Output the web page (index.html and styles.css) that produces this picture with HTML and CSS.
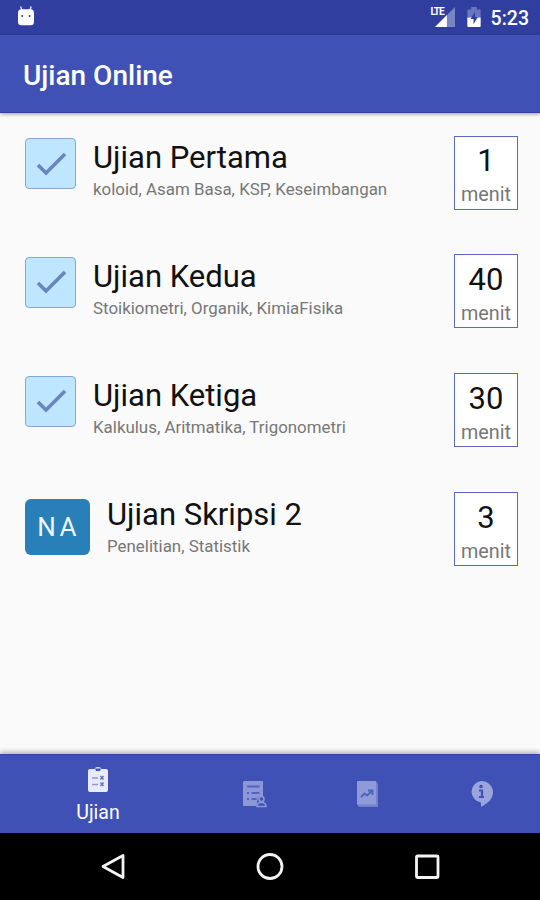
FILE: index.html
```html
<!DOCTYPE html>
<html lang="id">
<head>
<meta charset="utf-8">
<title>Ujian Online</title>
<link rel="stylesheet" href="styles.css">
</head>
<body>
<div class="screen">
  <div class="status">
    <svg class="droid" width="18" height="20" viewBox="0 0 18 20"><path d="M3.500 0.500 5 4M14.200 0.500 13 4" stroke="#d5daf5" stroke-width="1.500"/><rect x="1" y="3.200" width="16" height="16" rx="3.500" fill="#fff"/><circle cx="5.200" cy="10" r="1" fill="#303f9f"/><circle cx="12.600" cy="10" r="1" fill="#303f9f"/></svg>
    <div class="signal">
      <span class="lte">LTE</span>
      <svg width="20" height="20" viewBox="0 0 21 21"><path d="M0 21 21 0V21Z" fill="#7984c4"/><path d="M0 21 12.500 8.500V21Z" fill="#fff"/></svg>
    </div>
    <svg class="battery" width="14" height="20" viewBox="0 0 14 21"><path d="M4 0h6v2.500h3q1 0 1 1V11H0V3.500q0-1 1-1h3Z" fill="#6975bd"/><path d="M0 11h14v9q0 1-1 1H1q-1 0-1-1Z" fill="#fff"/><path d="M8 5 3.500 12.500H6.500V18L11 10.500H8Z" fill="#303f9f"/></svg>
    <span class="clock">5:23</span>
  </div>
  <header class="appbar"><h1>Ujian Online</h1></header>
  <main class="list">
    <section class="row">
      <div class="check"><svg width="32" height="26" viewBox="0 0 32 26"><path d="M3 14 11 22 30 3" fill="none" stroke="#6886bd" stroke-width="3.600"/></svg></div>
      <div class="info"><h2>Ujian Pertama</h2><p>koloid, Asam Basa, KSP, Keseimbangan</p></div>
      <div class="time"><b>1</b><span>menit</span></div>
    </section>
    <section class="row">
      <div class="check"><svg width="32" height="26" viewBox="0 0 32 26"><path d="M3 14 11 22 30 3" fill="none" stroke="#6886bd" stroke-width="3.600"/></svg></div>
      <div class="info"><h2>Ujian Kedua</h2><p>Stoikiometri, Organik, KimiaFisika</p></div>
      <div class="time"><b>40</b><span>menit</span></div>
    </section>
    <section class="row">
      <div class="check"><svg width="32" height="26" viewBox="0 0 32 26"><path d="M3 14 11 22 30 3" fill="none" stroke="#6886bd" stroke-width="3.600"/></svg></div>
      <div class="info"><h2>Ujian Ketiga</h2><p>Kalkulus, Aritmatika, Trigonometri</p></div>
      <div class="time"><b>30</b><span>menit</span></div>
    </section>
    <section class="row">
      <div class="na">NA</div>
      <div class="info"><h2>Ujian Skripsi 2</h2><p>Penelitian, Statistik</p></div>
      <div class="time"><b>3</b><span>menit</span></div>
    </section>
  </main>
  <nav class="tabs">
    <div class="tab active">
      <svg width="20" height="25" viewBox="0 0 20 25"><path d="M2 2H6.500Q7 0 10 0T13.500 2H18q2 0 2 2V23q0 2-2 2H2q-2 0-2-2V4q0-2 2-2Z" fill="#e7eafa"/><path d="M7 1.500h6L12 4H8Z" fill="#3f51b5"/><path d="M4 11h6M4 17.500h6" stroke="#8d98d4" stroke-width="1.500"/><path d="m12.500 9 3 3.500m0-3.500-3 3.500M12.500 15.500l3 3.500m0-3.500-3 3.500" stroke="#6471c2" stroke-width="1.500"/></svg>
      <span>Ujian</span>
    </div>
    <div class="tab">
      <svg class="report" width="24" height="27" viewBox="0 0 24 27"><path d="M1 0H20V15.500Q15 14 14.500 19L13.500 25H0V1Z" fill="#8b97d6"/><path d="M4 5.500H16.500M4 12h2M8.500 12h8M4 18h2M8.500 18h5" stroke="#5363bd" stroke-width="1.800"/><circle cx="18.500" cy="18" r="2.500" fill="none" stroke="#8b97d6" stroke-width="1.700"/><path d="M14 25.500q0-4 4.500-4t4.500 4Z" fill="none" stroke="#8b97d6" stroke-width="1.700"/></svg>
    </div>
    <div class="tab">
      <svg width="21" height="27" viewBox="0 0 21 27"><path d="M1 0H19L21 3V26H2L0 23V1Z" fill="#7482cc"/><rect width="19" height="23.500" rx="1" fill="#8f9bd8"/><path d="m4 16 3.500-3.500 2.500 2L15 10M11 9.500h4.500V14" fill="none" stroke="#5060bc" stroke-width="1.800"/></svg>
    </div>
    <div class="tab">
      <svg width="24" height="26" viewBox="0 0 24 26"><path d="M12 0a12 11 0 0 1 12 11q0 7-6 11l-6 4V21.500A12 11 0 0 1 12 0Z" fill="#9aa5dd"/><circle cx="12" cy="5.500" r="1.800" fill="#4052b6"/><path d="M10 9.500h3V16M10 16h5" fill="none" stroke="#4052b6" stroke-width="2.200"/></svg>
    </div>
  </nav>
  <footer class="sysnav">
    <svg width="28" height="28" viewBox="0 0 28 28"><path d="M4 13.500 24 2.500V24.500Z" fill="none" stroke="#f4f4f4" stroke-width="2.800" stroke-linejoin="round"/></svg>
    <svg width="28" height="28" viewBox="0 0 28 28"><circle cx="14" cy="13.500" r="12" fill="none" stroke="#f4f4f4" stroke-width="2.800"/></svg>
    <svg width="28" height="28" viewBox="0 0 28 28"><rect x="3.500" y="3" width="21.500" height="21.500" rx="1" fill="none" stroke="#f4f4f4" stroke-width="2.800"/></svg>
  </footer>
</div>
</body>
</html>
```
FILE: styles.css
```css
* { box-sizing: border-box; }
body { margin: 0; font-family: Roboto, sans-serif; }
h1, h2, p { margin: 0; font-weight: 400; }
svg { display: block; flex: none; }
.screen { width: 540px; height: 900px; display: flex; flex-direction: column; background: #fafafa; overflow: hidden; }
.status { height: 35px; flex: none; background: #303f9f; display: flex; align-items: flex-start; padding: 6px 11px 0 17px; color: #fff; }
.signal { display: flex; margin-left: auto; }
.signal svg, .battery { margin-top: 1px; }
.lte { font: 700 10px/12px "Roboto", sans-serif; letter-spacing: -1px; margin-right: -9px; z-index: 1; }
.battery { margin-left: 12px; margin-right: 10px; }
.clock { font-size: 19.500px; line-height: 25px; font-weight: 500; }
.appbar { height: 78px; flex: none; background: #3f51b5; display: flex; align-items: center; padding: 4px 23px 0; border-bottom: 1px solid #2f419f; box-shadow: 0 1px 4px rgba(0,0,0,.4); z-index: 1; }
h1 { color: #fff; font-size: 28px; font-weight: 500; line-height: 36px; }
.list { flex: 1; min-height: 0; padding-top: 22.700px; }
.row { height: 118.800px; display: flex; align-items: flex-start; padding: 0 22px 0 25px; }
.check { width: 51px; height: 51px; margin: 2.400px 17px 0 0; border: 1px solid #86a6d3; border-radius: 4px; background: #bfe6ff; display: grid; place-items: center; }
.na { width: 65px; height: 56px; margin: 7px 17px 0 0; border-radius: 6px; background: #2980b9; color: #f0f6fb; font-size: 26px; line-height: 57px; letter-spacing: 3.500px; text-align: center; padding-left: 2px; }
.info { flex: 1; white-space: nowrap; }
h2 { color: #111; font-size: 31px; line-height: 36px; margin-top: 4.800px; }
p { color: #777; font-size: 16.900px; line-height: 20px; margin-top: 3px; }
.time { width: 64px; height: 74px; border: 1px solid #5b69c0; background: #fff; display: flex; flex-direction: column; align-items: center; }
.time b { font-weight: 400; font-size: 31px; line-height: 36px; color: #111; margin-top: 6.800px; }
.time span { font-size: 19.800px; line-height: 24px; color: #777; margin-top: 3.800px; }
.tabs { height: 79px; flex: none; background: #3f51b5; border-top: 1px solid #33459f; box-shadow: 0 -2px 5px rgba(0,0,0,.3); display: grid; grid-template-columns: 196px repeat(3, 114px); z-index: 1; }
.tab { display: flex; flex-direction: column; align-items: center; padding-top: 26px; }
.report { margin-left: 4px; }
.active { padding-top: 12px; color: #fff; font-size: 19.500px; line-height: 24px; }
.active span { margin-top: 9px; }
.sysnav { height: 67px; flex: none; background: #000; display: flex; justify-content: space-between; align-items: center; padding: 0 99px; }
```
